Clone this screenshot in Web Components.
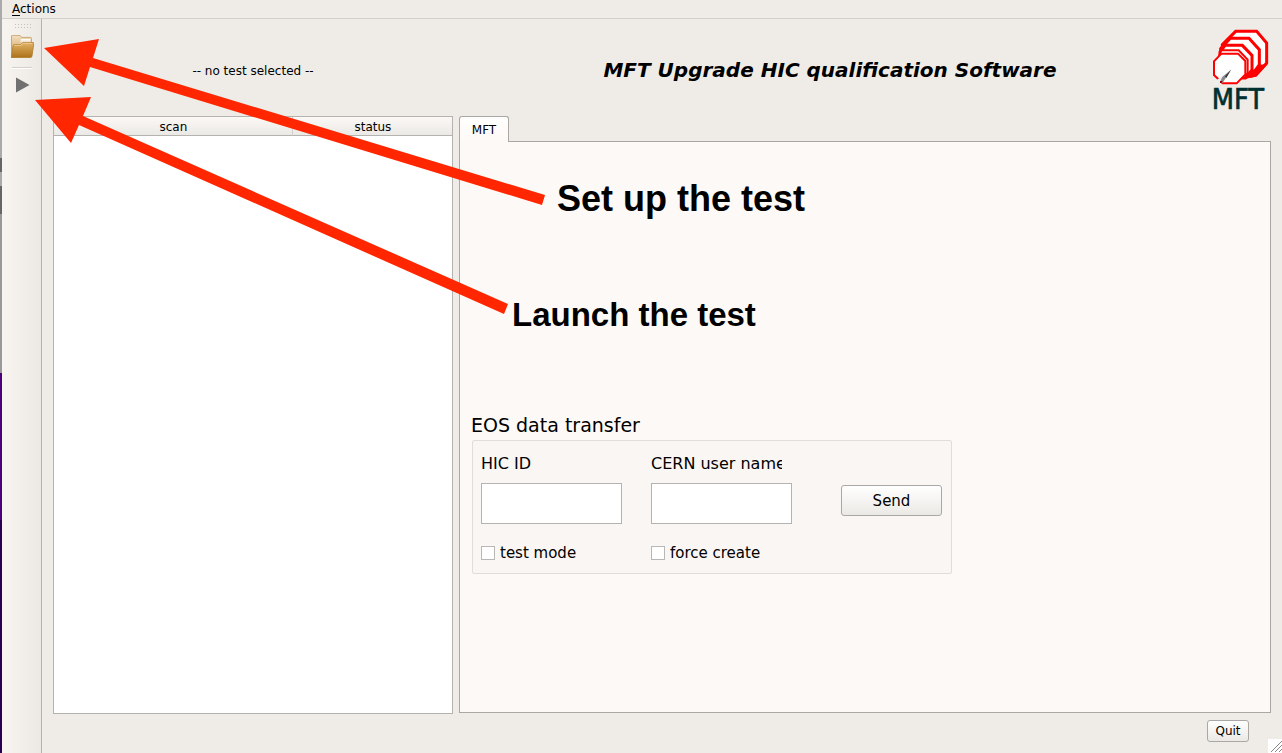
<!DOCTYPE html>
<html lang="en">
<head>
<meta charset="utf-8">
<title>MFT Upgrade HIC qualification Software</title>
<style>
html,body{margin:0;height:100%}
body{font:12px/14px "DejaVu Sans",sans-serif;color:#000;background:#efece8}
</style>
</head>
<body>
<mft-window></mft-window>
<script>
const define = (name, html) => customElements.define(name, class extends HTMLElement {
  constructor() {
    super();
    this.attachShadow({mode: "open"}).innerHTML = "<style>*{box-sizing:border-box}</style>" + html;
  }
});

define("menu-bar", `<style>
:host{display:flex;height:19px;box-sizing:border-box;border-bottom:1px solid #d3d0cb;padding:2px 10px}
button{border:0;background:none;padding:0;font:inherit;color:inherit}
u{text-underline-offset:2px}
</style><button><u>A</u>ctions</button>`);

define("tool-bar", `<style>
:host{display:flex;flex-direction:column;width:40px;box-sizing:border-box;border-right:1px solid #b5b3b0;background:linear-gradient(90deg,#f8f4ef,#ece9e4);padding:5px 8px}
button{border:0;background:none;padding:0;width:24px;height:24px}
svg{display:block}
.grip{margin:0 4px;height:11px}
hr{width:20px;height:2px;border:0;margin:8px 2px 7px;background:linear-gradient(#d3d0cc 50%,#fff 50%)}
</style>
<svg class="grip" width="18" height="5" fill="#c4c1bc"><path d="M1 0h1v1H1zM4 0h1v1H4zM7 0h1v1H7zM10 0h1v1h-1zM13 0h1v1h-1zM16 0h1v1h-1zM1 3h1v1H1zM4 3h1v1H4zM7 3h1v1H7zM10 3h1v1h-1zM13 3h1v1h-1zM16 3h1v1h-1z"/></svg>
<button aria-label="Set up test"><svg width="24" height="24" viewBox="0 0 24 24">
<defs><linearGradient id="a" x2="0" y2="1"><stop stop-color="#f3dfc0"/><stop offset="1" stop-color="#c9954a"/></linearGradient><linearGradient id="b" x2="0" y2="1"><stop stop-color="#e2b369"/><stop offset="1" stop-color="#ad7219"/></linearGradient><linearGradient id="c" x2="0" y2="1"><stop stop-color="#fff"/><stop offset="1" stop-color="#e6d3b4"/></linearGradient></defs>
<path d="M1.500 22.500V1q0-.6.700-.6H10l1.500 2h9q1 0 1 1V20z" fill="url(#a)" stroke="#c09a62" stroke-width=".8"/>
<path d="M11 4h9.500v4H10z" fill="url(#c)"/>
<path d="M1.500 22.500L3 11q.2-1.500 1.500-1.500h6l2.500-2h10q1 0 .8 1L22 21q-.2 1.500-1.500 1.500z" fill="url(#b)" stroke="#ad7c30" stroke-width=".8"/>
<path d="M4 11q.2-.7 1-.7h5.800l2.500-2h9" fill="none" stroke="#efcc90"/></svg></button>
<hr>
<button aria-label="Launch test"><svg width="24" height="24"><path d="M6 1.500L19.500 9 6 16.500z" fill="#707070"/></svg></button>`);

define("mft-logo", `<style>:host{display:block}svg{display:block;overflow:visible}</style>
<svg width="58" height="84" viewBox="66 24 174 252" role="img" aria-label="MFT logo">
<path d="M90 92L97 70 200 90 232 120V134L198 170 166 176z" fill="#f00"/>
<g fill="#fff" stroke="#f00" stroke-width="9">
<path d="M137 34H200L230 69V129L198 165H130L97 130V74z"/>
<path d="M121 55H177L208 89V134L185 168H118L92 135V86z"/>
<path d="M105 76H157L186 106V150L166 174H112L90 145V96z"/>
<path d="M94 91H146L173 119V158L164 174H112L88 145V105z" stroke-width="6"/>
<path d="M94 101H144L166 123V163L140 190H98L72 165V124z" stroke-width="6"/></g>
<path d="M230 133L198 168 166 176 187 152 208 134z" fill="#f00"/>
<path d="M63 195L84 177 123 150 97 190 91 185 81 195z" fill="#eee"/><path d="M97 171L123 149 98 188 91 184z" fill="#888"/><path d="M105 169L123 149 109 174z" fill="#333"/><path d="M90 183h7v6h-7z" fill="#900"/>
<text x="65" y="267" font-family="DejaVu Sans Condensed,DejaVu Sans" font-size="86" fill="#003030" stroke="#003030" stroke-width="2">MFT</text>
</svg>`);

define("scan-table", `<style>
:host{display:block;background:#fff;border:1px solid #b5b3b0;box-sizing:border-box}
table{width:100%;border-collapse:separate;border-spacing:0;table-layout:fixed}
th{height:19px;padding:2px 0 0 1px;line-height:16px;font-weight:400;border-bottom:1px solid #b5b3b0;background:linear-gradient(#fbf8f5,#ebe9e6)}
th:first-child{width:60%;border-right:1px solid #d3d0cc}
</style><table><thead><tr><th scope="col">scan</th><th scope="col">status</th></tr></thead><tbody></tbody></table>`);

define("push-button", `<style>
:host{display:block}
button{display:block;width:100%;height:100%;padding:0;font:inherit;color:inherit;border:1px solid #aaa8a5;border-radius:3px;background:linear-gradient(#fff,#ebe9e5)}
</style><button><slot></slot></button>`);

define("transfer-form", `<style>
:host{display:block}
h2{margin:0;font-size:19px;line-height:24px;font-weight:400}
form{max-width:480px;margin:3px 0 0 1px;padding:14px 9px 11px 8px;border:1px solid #e0dddb;border-radius:2px;background:#faf6f3;display:grid;grid-template-columns:170px 190px 101px;font-size:15px;line-height:18px}
.name{font-size:16px;width:131px;overflow:hidden;white-space:nowrap;margin-bottom:10px}
input{margin:0}
input[type=text]{width:141px;height:41px;border:1px solid #b5b3b0;border-radius:0;background:#fff;font:inherit}
.tick{display:flex;align-items:center;gap:5px;margin-top:20px}
.tick input{appearance:none;width:14px;height:14px;border:1px solid #b9b7b4;background:#fff}
push-button{height:31px;margin-top:2px}
</style>
<h2>EOS data transfer</h2>
<form>
<label class="name" for="hic">HIC ID</label><label class="name" for="user">CERN user name</label><span></span>
<input type="text" id="hic"><input type="text" id="user"><push-button>Send</push-button>
<label class="tick"><input type="checkbox">test mode</label><label class="tick"><input type="checkbox">force create</label>
</form>`);

define("tab-panel", `<style>
:host{display:flex;flex-direction:column}
button{position:relative;z-index:1;align-self:flex-start;width:50px;height:26px;margin-bottom:-1px;padding:0;border:1px solid #aaa8a5;border-bottom:0;border-radius:3px 3px 0 0;background:linear-gradient(#fff,#fdf9f6);font:inherit;color:inherit}
section{flex:1;border:1px solid #aaa8a5;background:#fdf9f6;padding:271px 11px 20px}
</style><button role="tab" aria-selected="true">MFT</button><section role="tabpanel"><slot></slot></section>`);

define("guide-notes", `<style>
:host{position:absolute;inset:0;pointer-events:none;overflow:hidden}
svg{position:absolute;left:0;top:0}
p{position:absolute;margin:0;font-family:"Liberation Sans",sans-serif;font-weight:700;white-space:nowrap}
.setup{left:557px;top:178px;font-size:36px;line-height:42px}
.launch{left:512px;top:295px;font-size:33px;line-height:40px}
</style>
<svg width="560" height="330" fill="#ff2600"><path d="M44 48L99 39 93 58 545 195 542 205 90 67 84 86z"/><path d="M35 100L91 97 83 116 508 304 504 314 79 125 71 143z"/></svg>
<p class="setup">Set up the test</p><p class="launch">Launch the test</p>`);

define("mft-window", `<style>
:host{display:grid;grid-template-columns:2px 1fr;min-height:100vh;position:relative}
.edge{background:linear-gradient(#aaa 0 158px,#666 158px 172px,#aaa 172px 186px,#666 186px 214px,#999 214px 373px,#4b0078 373px 520px,#29004f 520px)}
.frame,.main{display:flex;flex-direction:column;min-width:0}
.body{flex:1;display:flex}
.main{flex:1;padding:0 11px}
header,.work{display:grid;grid-template-columns:400px 1fr;column-gap:6px}
header{height:97px;align-items:center;text-align:center}
.state{padding-top:7px}
.brand{display:flex;align-items:center;padding-right:1px}
h1{flex:1;margin:0;padding:4px 11px 0 0;font:italic bold 20px/24px "DejaVu Sans",sans-serif}
mft-logo{margin-top:4px}
.work{flex:1}
scan-table{margin-bottom:-1px}
footer{height:40px;display:flex;justify-content:flex-end;padding:7px 22px 11px 0}
push-button{width:42px}
.grip{position:absolute;right:0;bottom:0;background:#fff}
</style>
<div class="edge"></div>
<div class="frame"><menu-bar></menu-bar>
<div class="body"><tool-bar></tool-bar>
<div class="main">
<header><div class="state">-- no test selected --</div><div class="brand"><h1>MFT Upgrade HIC qualification Software</h1><mft-logo></mft-logo></div></header>
<div class="work"><scan-table></scan-table><tab-panel><transfer-form></transfer-form></tab-panel></div>
<footer><push-button>Quit</push-button></footer>
</div></div></div>
<svg class="grip" width="14" height="14" stroke="#888" fill="none"><path d="M3 13L14 2M7 13L14 6M11 13L14 10"/></svg>
<guide-notes></guide-notes>`);
</script>
</body>
</html>
